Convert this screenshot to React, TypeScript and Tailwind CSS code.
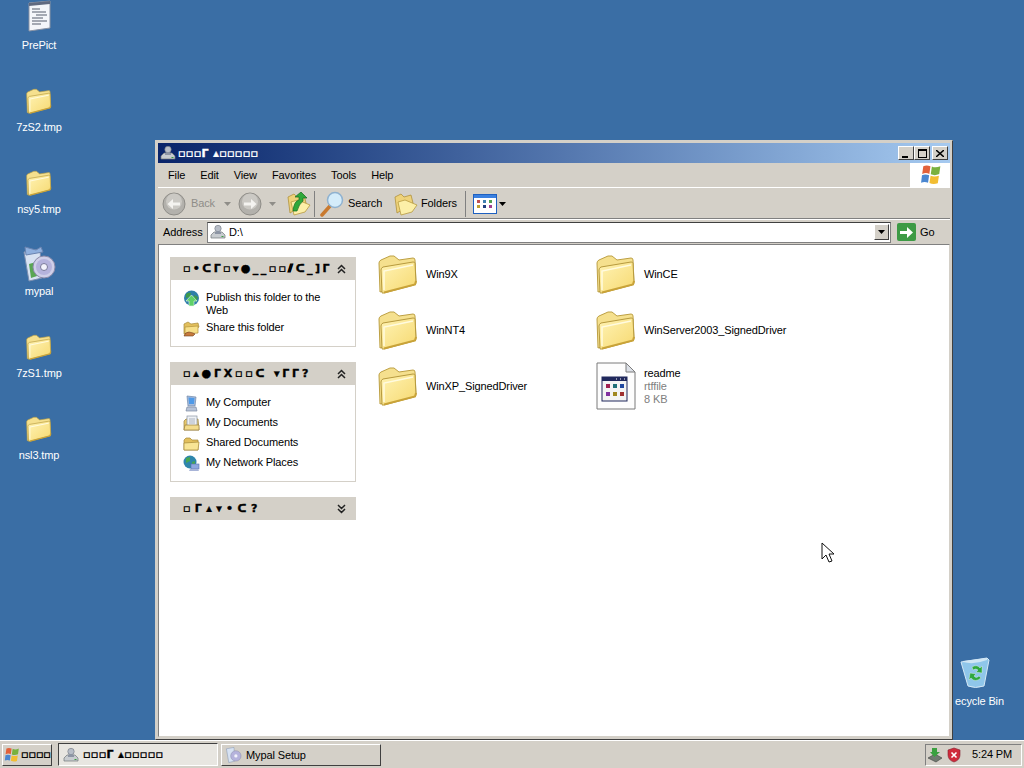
import React from "react";

const Folder = ({ s = 40 }: { s?: number }) => (
  <svg width={s} height={s} viewBox="0 0 40 40" className="block">
    <defs>
      <linearGradient id="fg" x1="0" y1="0" x2="1" y2="1">
        <stop offset="0" stopColor="#fff3b4" />
        <stop offset="1" stopColor="#f6d971" />
      </linearGradient>
    </defs>
    <path d="M2 38 L1 9 Q1 7 3 6 L12 2 L16 2 L21 6 L35 4 Q37 4 37 6 L38 28 L8 36 Z" fill="#f5e08e" stroke="#bda044" strokeWidth="1" />
    <path d="M4 39 L3 16 Q3 14 5 13 L35 8 Q37 8 37 9 L38 29 Q38 30 36 31 L6 39 Z" fill="url(#fg)" stroke="#b79a3e" strokeWidth="1" />
    <path d="M6 36 L6 17 L35 11" fill="none" stroke="#fffbe0" strokeWidth="1.5" />
    <path d="M6 38.5 L37 30.5 L38 27" fill="none" stroke="#c9a339" strokeWidth="2" />
  </svg>
);

const ToolFolder = () => (
  <svg width="24" height="24" viewBox="0 0 24 24" className="block">
    <path d="M3 21 L1 5 L7 2 L10 5 L17 3 L19 11 Z" fill="#eed27a" stroke="#b0923e" strokeWidth=".8" />
    <path d="M7 23 L4 10 L11 8 L23 13 L18 20 Z" fill="#fcefa8" stroke="#b89a40" strokeWidth=".8" />
  </svg>
);

const Drive = ({ s = 16 }: { s?: number }) => (
  <svg width={s} height={s} viewBox="0 0 16 16" className="block shrink-0">
    <path d="M1 11 L4 8 L12 8 L15 11 L15 14 L1 14 Z" fill="#c8ccd0" stroke="#70757a" strokeWidth=".7" />
    <circle cx="8" cy="4.5" r="3.2" fill="#b8bec8" stroke="#6e7680" strokeWidth=".6" />
    <path d="M5 8 Q8 6 11 8 L11 10 L5 10 Z" fill="#8d95a4" />
    <rect x="11.5" y="12" width="2" height="1" fill="#3aa040" />
  </svg>
);

const NavCircle = ({ dir }: { dir: "l" | "r" }) => (
  <svg width="24" height="24" viewBox="0 0 24 24" className="block">
    <circle cx="12" cy="12" r="11" fill="#b3b1ac" stroke="#8f8d88" />
    <circle cx="12" cy="9.5" r="8" fill="#cbc9c4" />
    {dir === "l" ? (
      <path d="M18 10.5 H11 V7 L5.5 12 L11 17 V13.5 H18 Z" fill="#f4f3f0" />
    ) : (
      <path d="M6 10.5 H13 V7 L18.5 12 L13 17 V13.5 H6 Z" fill="#f4f3f0" />
    )}
  </svg>
);

const Caret = ({ c = "#5b5a57" }: { c?: string }) => (
  <svg width="7" height="4" viewBox="0 0 7 4" className="block">
    <path d="M0 0 H7 L3.5 4 Z" fill={c} />
  </svg>
);

const Chevrons = ({ up }: { up: boolean }) => (
  <svg width="9" height="10" viewBox="0 0 9 10" className="block shrink-0">
    <path d={up ? "M1 5 L4.5 1.5 L8 5 M1 9 L4.5 5.5 L8 9" : "M1 1 L4.5 4.5 L8 1 M1 5 L4.5 8.5 L8 5"} fill="none" stroke="#222" strokeWidth="1.5" />
  </svg>
);

const WinLogo = ({ s = 20 }: { s?: number }) => (
  <svg width={s} height={s} viewBox="0 0 20 20" className="block shrink-0">
    <path d="M3 2 Q6 0.5 9.5 2 L8.5 9 Q5.5 7.5 2 9 Z" fill="#e2613a" />
    <path d="M10.8 2.2 Q14 4 18.5 2 L17.5 9.2 Q13.5 11 9.8 9.4 Z" fill="#79b13f" />
    <path d="M1.8 10.2 Q5 9 8.3 10.3 L7.3 17 Q4.3 15.5 1 17 Z" fill="#4a86d0" />
    <path d="M9.6 10.6 Q13 12 17.2 10.6 L16.2 17.5 Q12 19 8.6 17.3 Z" fill="#f2bd32" />
  </svg>
);

const SmallGlobe = () => (
  <svg width="17" height="17" viewBox="0 0 17 17" className="block">
    <circle cx="8.5" cy="8" r="7.5" fill="#2f7fa8" />
    <path d="M3 4 Q6 2 8 3 L7 7 L3 8 Z M11 5 L15 7 L13 12 L10 10 Z" fill="#3d9a4b" />
    <path d="M8.5 5 L14 11 H11 V16 H6 V11 H3 Z" fill="#5fd068" stroke="#e9f8e9" strokeWidth=".6" />
  </svg>
);

const ShareFolder = () => (
  <svg width="17" height="17" viewBox="0 0 17 17" className="block">
    <path d="M1 14 L1 4 L5 2 L8 4 L15 3 L16 7 L5 14 Z" fill="#e2bf5c" stroke="#a88a3a" strokeWidth=".7" />
    <path d="M2 14 L2 7 L15 6 L15 13 Z" fill="#f7e08a" stroke="#b3923a" strokeWidth=".7" />
    <path d="M1 16 Q2 12 6 12 L10 13 L12 14 L10 16 Z" fill="#c77a3c" stroke="#704020" strokeWidth=".6" />
  </svg>
);

const MyComputer = () => (
  <svg width="17" height="17" viewBox="0 0 17 17" className="block">
    <path d="M4 1 L13 2 L12 11 L5 11 Z" fill="#a8bcdc" stroke="#6f86a8" strokeWidth=".7" />
    <path d="M5.5 2.5 L11.5 3 L11 9 L6 9 Z" fill="#4f9ae8" />
    <path d="M4 12 L13 12 L14 16 L3 16 Z" fill="#b8c4d8" stroke="#7d8aa0" strokeWidth=".7" />
  </svg>
);

const MyDocs = () => (
  <svg width="17" height="17" viewBox="0 0 17 17" className="block">
    <path d="M1 15 L1 6 L3 4 L15 4 L16 15 Z" fill="#e6c86c" stroke="#9a803c" strokeWidth=".7" />
    <rect x="4" y="1" width="10" height="10" fill="#eef1f5" stroke="#8a94a4" strokeWidth=".7" />
    <path d="M6 4 H12 M6 6 H12 M6 8 H12" stroke="#9aa4b4" strokeWidth=".8" />
    <path d="M1 15 L2 10 H16 L16 15 Z" fill="#f3dc8c" stroke="#9a803c" strokeWidth=".7" />
  </svg>
);

const SharedDocs = () => (
  <svg width="17" height="17" viewBox="0 0 17 17" className="block">
    <path d="M1 15 L1 5 L3 3 L7 3 L9 5 L15 5 L15 15 Z" fill="#e2bf5c" stroke="#a38838" strokeWidth=".7" />
    <path d="M1 15 L1 8 L16 7 L15 15 Z" fill="#f8e595" stroke="#a38838" strokeWidth=".7" />
  </svg>
);

const NetPlaces = () => (
  <svg width="17" height="17" viewBox="0 0 17 17" className="block">
    <circle cx="7" cy="7" r="6.5" fill="#2f86ac" />
    <path d="M3 3 L7 2 L7 6 L3 8 Z M9 7 L12 6 L12 10 L9 11 Z" fill="#46a653" />
    <rect x="8" y="9" width="8" height="5" fill="#8fa8e0" stroke="#5d70b0" strokeWidth=".6" />
    <path d="M6 16 H16 L15 14 H7 Z" fill="#a8b4d8" />
  </svg>
);

const Notepad = () => (
  <svg width="26" height="32" viewBox="0 0 26 32" className="block">
    <path d="M3 3 L24 1 L24 28 L3 31 Z" fill="#f4f6fa" stroke="#8a93a4" />
    <path d="M3 3 L24 1 L24 4 L3 6 Z" fill="#606a80" />
    <path d="M6 9 H14 M6 12 H20 M10 15 H21 M6 18 H17 M6 21 H21 M6 24 H15" stroke="#545c6c" strokeWidth="1" />
  </svg>
);

const Installer = () => (
  <svg width="34" height="36" viewBox="0 0 34 36" className="-mb-[4px] block">
    <path d="M2 6 L18 3 L20 32 L7 35 Z" fill="#d7e2f2" stroke="#7d8fb0" />
    <path d="M3 1 L14 4 L19 1 L21 6 L4 9 Z" fill="#8fb0de" stroke="#6a84b0" />
    <path d="M7 18 L14 16 L15 30 L9 32 Z" fill="#59a653" />
    <circle cx="22" cy="21" r="11" fill="#cfcfe8" stroke="#8a8aa8" />
    <circle cx="22" cy="21" r="8" fill="#b5b3dc" />
    <circle cx="22" cy="21" r="3.5" fill="#f3f3fb" stroke="#7a7a9a" />
  </svg>
);

const Recycle = () => (
  <svg width="30" height="32" viewBox="0 0 30 32" className="block">
    <path d="M1 5 L27 1 L29 3 L24 29 Q15 32 8 29 Z" fill="#8fc6ea" stroke="#d5e8f6" />
    <path d="M3 5 Q14 8 27 3 L27 1 L3 4 Z" fill="#d0e6f4" />
    <path d="M12 10 Q17 7 20 11 L22 9 L22 16 L16 15 L18 13 Q16 11 13 13 Z M10 16 L16 17 L14 19 Q16 22 19 19 L21 21 Q15 26 11 21 L9 23 Z" fill="#2fa83e" stroke="#e9f8e9" strokeWidth=".4" />
  </svg>
);

const RtfIcon = () => (
  <svg width="40" height="48" viewBox="0 0 40 48" className="block">
    <path d="M1 1 H30 L39 10 V47 H1 Z" fill="#fdfdfd" stroke="#7b7b7b" />
    <path d="M30 1 V10 H39 Z" fill="#dde1e8" stroke="#7b7b7b" />
    <rect x="6" y="15" width="25" height="24" fill="#f4f4f4" stroke="#20285c" />
    <rect x="6" y="15" width="25" height="4" fill="#20285c" />
    <path d="M20 17 h1 M24 17 h1 M28 17 h1" stroke="#fff" strokeWidth="1" />
    <rect x="10" y="22" width="4" height="4" fill="#a02050" />
    <rect x="17" y="22" width="4" height="4" fill="#207078" />
    <rect x="24" y="22" width="4" height="4" fill="#2048a0" />
    <rect x="10" y="30" width="4" height="4" fill="#8030a0" />
    <rect x="17" y="30" width="4" height="4" fill="#a08820" />
    <rect x="24" y="30" width="4" height="4" fill="#a03030" />
  </svg>
);

const Cursor = () => (
  <svg width="14" height="22" viewBox="0 0 14 22" className="block">
    <path d="M1 1 L1 17 L5 13 L8 20 L11 19 L8 12 L13 12 Z" fill="#fff" stroke="#111" strokeWidth="1" />
  </svg>
);

const Garbled = ({ t, track = "tracking-[0.4px]" }: { t: string; track?: string }) => (
  <span className={`font-['DejaVu_Sans',sans-serif] text-[11px] font-bold leading-none whitespace-pre [-webkit-text-stroke:0.4px_currentColor] ${track}`}>{t}</span>
);

const Panel = ({ title, track, up = true, children }: { title: string; track: string; up?: boolean; children?: React.ReactNode }) => (
  <div className="mb-[15px] w-[186px]">
    <div className="flex h-[23px] items-center justify-between bg-[#d4d0c8] pl-[13px] pr-[10px] text-black">
      <Garbled t={title} track={track} />
      <Chevrons up={up} />
    </div>
    {children && <div className="border border-t-0 border-[#d4d0c8] bg-white">{children}</div>}
  </div>
);

const TaskLink = ({ icon, children }: { icon: React.ReactNode; children: React.ReactNode }) => (
  <div className="flex items-start">
    <div className="w-[35px] shrink-0 pl-[12px]">{icon}</div>
    <div className="pt-[1px] leading-[13px]">{children}</div>
  </div>
);

const FileItem = ({ icon, children }: { icon: React.ReactNode; children: React.ReactNode }) => (
  <div className="flex h-[56px] items-center">
    <div className="w-[48px] shrink-0">{icon}</div>
    <div className="leading-[13px]">{children}</div>
  </div>
);

const DesktopIcon = ({ label, children }: { label: string; children: React.ReactNode }) => (
  <div className="flex h-[82px] w-[78px] flex-col items-center">
    <div className="flex h-[32px] items-end">{children}</div>
    <div className="mt-[6px] leading-[14px] text-white">{label}</div>
  </div>
);

const bevel = "border border-t-white border-l-white border-r-[#404040] border-b-[#404040]";

export default function App() {
  return (
    <div className="flex h-[768px] w-[1024px] flex-col overflow-hidden bg-[#3a6ea5] font-['Liberation_Sans',sans-serif] text-[11px] tracking-[-0.12px] text-black">
      <div className="relative flex-1">
        <div className="flex flex-col">
          <DesktopIcon label="PrePict"><Notepad /></DesktopIcon>
          <DesktopIcon label="7zS2.tmp"><Folder s={26} /></DesktopIcon>
          <DesktopIcon label="nsy5.tmp"><Folder s={26} /></DesktopIcon>
          <DesktopIcon label="mypal"><Installer /></DesktopIcon>
          <DesktopIcon label="7zS1.tmp"><Folder s={26} /></DesktopIcon>
          <DesktopIcon label="nsl3.tmp"><Folder s={26} /></DesktopIcon>
        </div>

        <div className="absolute left-[955px] top-[657px] flex w-[60px] flex-col items-start">
          <div className="ml-[5px]"><Recycle /></div>
          <div className="mt-[5px] whitespace-nowrap leading-[14px] text-white">ecycle Bin</div>
        </div>

        <div className="absolute left-[155px] top-[140px] flex h-[600px] w-[798px] flex-col border border-t-[#d4d0c8] border-l-[#d4d0c8] border-r-[#404040] border-b-[#404040] bg-[#d4d0c8] p-[2px]">
          <div className="flex h-[20px] shrink-0 items-center justify-between bg-gradient-to-r from-[#0a246a] to-[#a6caf0] pl-[2px] pr-[2px]">
            <div className="flex items-center gap-[2px] text-white">
              <Drive />
              <Garbled t="▫▫▫Γ ▴▫▫▫▫▫" />
            </div>
            <div className="flex">
              {["min", "max"].map((k) => (
                <div key={k} className={`flex h-[14px] w-[16px] items-center justify-center bg-[#d4d0c8] ${bevel}`}>
                  {k === "min" ? <div className="mt-[7px] mr-[2px] h-[2px] w-[6px] bg-black" /> : <div className="h-[9px] w-[9px] border border-t-2 border-black" />}
                </div>
              ))}
              <div className={`ml-[2px] flex h-[14px] w-[16px] items-center justify-center bg-[#d4d0c8] ${bevel}`}>
                <svg width="8" height="7" viewBox="0 0 8 7"><path d="M0 0 L8 7 M8 0 L0 7" stroke="#000" strokeWidth="1.5" /></svg>
              </div>
            </div>
          </div>

          <div className="flex h-[25px] shrink-0 items-center justify-between border-b border-white">
            <div className="flex gap-[15px] pl-[10px] pt-[1px]">
              {["File", "Edit", "View", "Favorites", "Tools", "Help"].map((m) => (
                <span key={m}>{m}</span>
              ))}
            </div>
            <div className="flex h-full w-[40px] items-center justify-center border-l border-white bg-white">
              <WinLogo s={22} />
            </div>
          </div>

          <div className="flex h-[31px] shrink-0 items-center border-b border-[#808080] pl-[4px] pt-[1px]">
            <NavCircle dir="l" />
            <span className="ml-[5px] w-[25px] text-[#8f8d88]">Back</span>
            <div className="ml-[8px]"><Caret c="#8f8d88" /></div>
            <div className="ml-[7px]"><NavCircle dir="r" /></div>
            <div className="ml-[7px]"><Caret c="#8f8d88" /></div>
            <div className="relative ml-[11px] h-[24px] w-[22px]">
              <ToolFolder />
              <svg width="16" height="20" viewBox="0 0 16 20" className="absolute left-[5px] top-[0px]">
                <path d="M1 19 Q2 9 7 8 V5 L3 5 L9 0 L15 6 H11 V9 Q7 12 5 19 Z" fill="#2ea83a" stroke="#146a20" strokeWidth=".7" />
              </svg>
            </div>
            <div className="ml-[5px] h-[26px] border-l border-[#808080]" />
            <div className="ml-[5px]">
              <svg width="25" height="26" viewBox="0 0 25 26" className="block">
                <path d="M2 24 L10 15" stroke="#c97a30" strokeWidth="3.5" strokeLinecap="round" />
                <circle cx="15" cy="9" r="7.5" fill="#d4ecfa" stroke="#8fb2d0" strokeWidth="1.5" />
              </svg>
            </div>
            <span className="ml-[3px] w-[35px]">Search</span>
            <div className="ml-[11px]"><ToolFolder /></div>
            <span className="ml-[3px] w-[34px]">Folders</span>
            <div className="ml-[10px] h-[26px] border-l border-[#808080]" />
            <div className="ml-[7px]">
              <svg width="24" height="20" viewBox="0 0 24 20" className="block">
                <rect x=".5" y=".5" width="23" height="19" fill="#fff" stroke="#1e60c0" />
                <rect x="1" y="1" width="22" height="3" fill="#3a80e0" />
                <g>
                  <rect x="4" y="6" width="3" height="3" fill="#c05050" /><rect x="10" y="6" width="3" height="3" fill="#4080b0" /><rect x="16" y="6" width="3" height="3" fill="#50a050" />
                  <rect x="4" y="11" width="3" height="3" fill="#c0a030" /><rect x="10" y="11" width="3" height="3" fill="#204080" /><rect x="16" y="11" width="3" height="3" fill="#a04090" />
                </g>
              </svg>
            </div>
            <div className="ml-[2px]"><Caret c="#000" /></div>
          </div>

          <div className="flex h-[25px] shrink-0 items-center border-t border-white pl-[5px]">
            <span className="w-[40px]">Address</span>
            <div className="ml-[4px] flex h-[21px] w-[684px] items-center justify-between border border-[#808080] border-t-[#404040] bg-white pl-[2px] pr-[1px]">
              <div className="flex items-center gap-[3px]"><Drive /><span>D:\</span></div>
              <div className={`flex h-[16px] w-[15px] items-center justify-center bg-[#d4d0c8] ${bevel}`}><Caret c="#000" /></div>
            </div>
            <div className="ml-[6px] flex h-[18px] w-[19px] items-center justify-center rounded-[2px] bg-[#3d9a45]">
              <svg width="13" height="11" viewBox="0 0 13 11"><path d="M0 4 H7 V0 L13 5.5 L7 11 V7 H0 Z" fill="#fff" /></svg>
            </div>
            <span className="ml-[4px]">Go</span>
          </div>

          <div className="flex min-h-0 flex-1 border border-[#808080] border-r-[#d4d0c8] border-b-[#d4d0c8] bg-white">
            <div className="w-[219px] shrink-0 pl-[11px] pt-[12px]">
              <Panel title="▫•ᑕΓ▫▾●__▫▫⫽ᑕ_]Γ" track="tracking-[2.4px]">
                <div className="flex flex-col gap-[3px] pb-[9px] pt-[10px]">
                  <TaskLink icon={<SmallGlobe />}>Publish this folder to the<br />Web</TaskLink>
                  <TaskLink icon={<ShareFolder />}>Share this folder</TaskLink>
                </div>
              </Panel>
              <Panel title="▫▴●ΓX▫▫ᑕ ▾ΓΓ?" track="tracking-[2.8px]">
                <div className="flex flex-col gap-[3px] pb-[9px] pt-[10px]">
                  <TaskLink icon={<MyComputer />}>My Computer</TaskLink>
                  <TaskLink icon={<MyDocs />}>My Documents</TaskLink>
                  <TaskLink icon={<SharedDocs />}>Shared Documents</TaskLink>
                  <TaskLink icon={<NetPlaces />}>My Network Places</TaskLink>
                </div>
              </Panel>
              <Panel title="▫Γ▴▾•ᑕ?" up={false} track="tracking-[4.4px]" />
            </div>
            <div className="relative flex-1">
              <div className="grid w-[436px] grid-cols-[218px_218px] pt-[1px]">
                <FileItem icon={<Folder />}>Win9X</FileItem>
                <FileItem icon={<Folder />}>WinCE</FileItem>
                <FileItem icon={<Folder />}>WinNT4</FileItem>
                <FileItem icon={<Folder />}>WinServer2003_SignedDriver</FileItem>
                <FileItem icon={<Folder />}>WinXP_SignedDriver</FileItem>
                <FileItem icon={<RtfIcon />}>
                  <div>readme</div>
                  <div className="text-[#808080]">rtffile</div>
                  <div className="text-[#808080]">8 KB</div>
                </FileItem>
              </div>
              <div className="absolute left-[443px] top-[297px]"><Cursor /></div>
            </div>
          </div>
        </div>
      </div>

      <div className="flex h-[28px] shrink-0 items-center border-t border-white bg-[#d4d0c8] pl-[2px] pr-[2px]">
        <div className={`flex h-[22px] w-[50px] items-center gap-[1px] pl-[1px] ${bevel}`}>
          <WinLogo s={16} />
          <Garbled t="▫▫▫▫" track="tracking-[0px]" />
        </div>
        <div className="ml-[6px] flex h-[23px] w-[160px] items-center gap-[4px] border border-t-[#404040] border-l-[#404040] border-r-white border-b-white bg-[#e8e6e1] pl-[4px]">
          <Drive />
          <Garbled t="▫▫▫Γ ▴▫▫▫▫▫" />
        </div>
        <div className={`ml-[3px] flex h-[22px] w-[160px] items-center gap-[4px] pl-[3px] ${bevel}`}>
          <svg width="17" height="17" viewBox="0 0 34 36" className="block">
            <path d="M2 6 L18 3 L20 32 L7 35 Z" fill="#d7e2f2" stroke="#7d8fb0" />
            <circle cx="22" cy="21" r="11" fill="#b5b3dc" stroke="#8a8aa8" />
            <circle cx="22" cy="21" r="3.5" fill="#f3f3fb" />
          </svg>
          <span className="pt-[1px]">Mypal Setup</span>
        </div>
        <div className="flex-1" />
        <div className="flex h-[22px] w-[97px] items-center border border-t-[#808080] border-l-[#808080] border-r-white border-b-white pl-[1px]">
          <svg width="16" height="16" viewBox="0 0 16 16" className="block">
            <path d="M1 11 L8 7 L15 11 L9 15 Z" fill="#707a70" stroke="#404040" strokeWidth=".6" />
            <path d="M5 1 H10 V5 H13 L7.5 10 L3 5 H5 Z" fill="#3aa040" />
          </svg>
          <svg width="16" height="16" viewBox="0 0 16 16" className="ml-[3px] block">
            <path d="M8 1 L14 3 V8 Q14 13 8 15 Q2 13 2 8 V3 Z" fill="#d02a3a" stroke="#802030" strokeWidth=".6" />
            <path d="M5.5 5.5 L10.5 10.5 M10.5 5.5 L5.5 10.5" stroke="#fff" strokeWidth="1.6" />
          </svg>
          <span className="ml-[10px] whitespace-nowrap">5:24 PM</span>
        </div>
      </div>
    </div>
  );
}
